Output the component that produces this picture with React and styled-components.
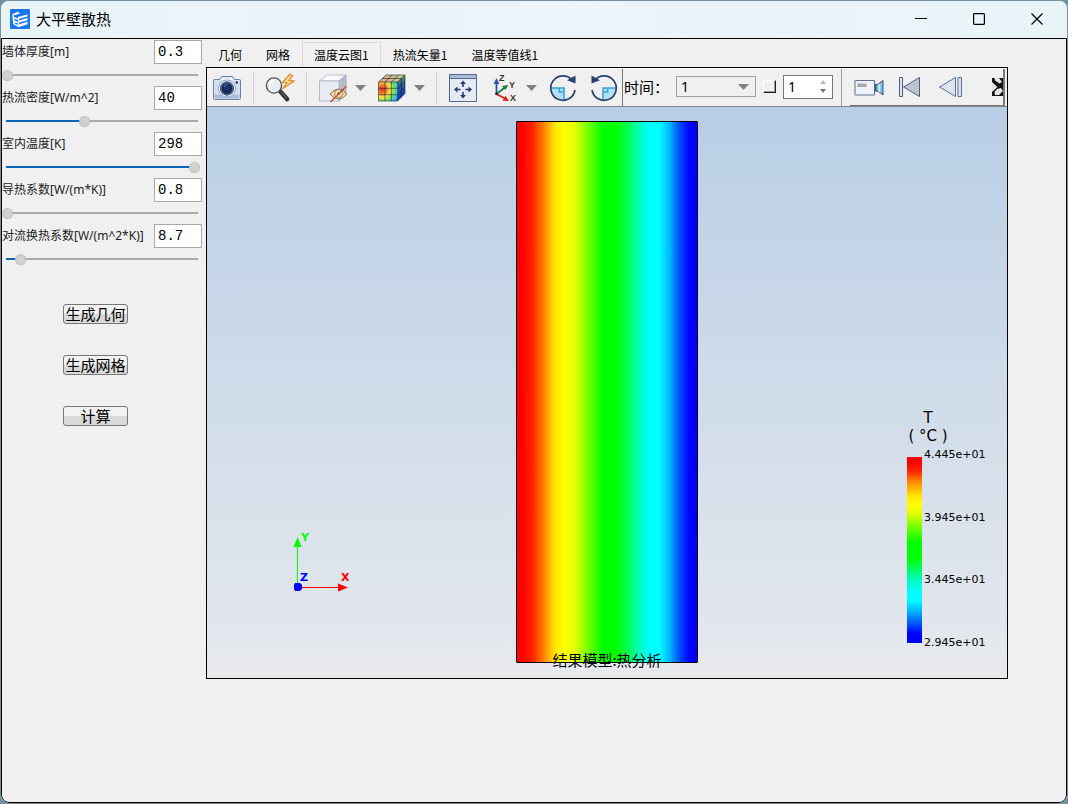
import React from 'react';
import styled, { createGlobalStyle } from 'styled-components';

const uiFont = '"Noto Sans", "Noto Sans CJK SC", sans-serif';
const cjkFont = '"Noto Sans CJK SC", sans-serif';
const sceneFont = '"DejaVu Sans", sans-serif';

const GlobalStyle = createGlobalStyle`
    * {
        box-sizing: border-box;
    }

    body {
        margin: 0;
        background: #6f929f;
        color: #000;
        font-family: ${uiFont};
        font-size: 12px;
    }

    button, input, select {
        margin: 0;
        font-family: inherit;
        color: inherit;
    }
`;

const Window = styled.div`
    display: flex;
    flex-direction: column;
    min-height: 100vh;
    border: 1px solid #7591a0;
    border-radius: 9px;
    background: #f0f0f0;
    overflow: hidden;
`;

const TitleBar = styled.header`
    display: flex;
    align-items: center;
    height: 37px;
    padding: 0 1px 2px 9px;
    background: linear-gradient(90deg, #e9f4f9, #ebf3fb 55%, #e9f4f8);
`;

const Title = styled.h1`
    flex: 1;
    margin: 0 0 0 6px;
    font-family: ${cjkFont};
    font-size: 15px;
    font-weight: 400;
    line-height: 20px;
`;

const WindowButton = styled.button`
    display: flex;
    align-items: center;
    justify-content: center;
    width: 58px;
    height: 35px;
    padding: 0;
    border: 0;
    background: none;
`;

const Content = styled.div`
    display: flex;
    flex: 1;
    border: 1px solid #000;
    border-radius: 0 0 8px 8px;
`;

const Sidebar = styled.aside`
    flex: none;
    width: 204px;
    padding-top: 1px;
`;

const Field = styled.div`
    display: flex;
    flex-wrap: wrap;
    align-items: center;
    justify-content: space-between;
    width: 200px;
`;

const FieldLabel = styled.label`
    font-size: 12px;
    line-height: 24px;
    color: #222;
    white-space: nowrap;
`;

const FieldInput = styled.input`
    width: 48px;
    height: 24px;
    padding: 0 3px;
    border: 1px solid #a9a9a9;
    border-radius: 0;
    background: #fff;
    font-family: "Liberation Mono", monospace;
    font-size: 14px;
    outline: none;
`;

const Slider = styled.input`
    appearance: none;
    width: 198px;
    height: 22px;
    background:
        linear-gradient(#0a66b8, #0a66b8) 4px center / calc((100% - 8px) * var(--fill)) 2px no-repeat,
        linear-gradient(#a9a9a9, #a9a9a9) 4px center / calc(100% - 6px) 2px no-repeat;
    outline: none;

    &::-webkit-slider-thumb {
        appearance: none;
        width: 11px;
        height: 11px;
        border: 1px dotted #aaa;
        border-radius: 50%;
        background: #d0d0d0;
    }
`;

const Actions = styled.div`
    display: flex;
    flex-direction: column;
    align-items: flex-start;
    gap: 31px;
    padding: 34px 0 0 61px;
`;

const ActionButton = styled.button`
    width: 65px;
    height: 20px;
    padding: 0;
    border: 1px solid #777;
    border-radius: 3px;
    background: linear-gradient(#f2f2f2 50%, #d9d9d9 50%);
    font-family: ${cjkFont};
    font-size: 15px;
    line-height: 18px;
    white-space: nowrap;
`;

const Workspace = styled.main`
    display: flex;
    flex: 1;
    flex-direction: column;
    min-width: 0;
    padding: 3px 58px 123px 0;
`;

const TabList = styled.div`
    display: flex;
    height: 25px;
`;

const Tab = styled.button`
    padding: 0 12px;
    border: 0;
    background: none;
    box-shadow: ${(props) => (props.$active ? 'inset 1px 1px #d9d9d9, inset -1px 0 #d9d9d9' : 'none')};
    font-family: ${cjkFont};
    font-size: 12px;
    line-height: 24px;
    white-space: nowrap;
`;

const Viewer = styled.section`
    display: flex;
    flex: 1;
    flex-direction: column;
    border: 1px solid #000;
`;

const Toolbar = styled.div`
    display: flex;
    height: 39px;
    border-top: 1px solid #fff;
    border-bottom: 1px solid #808080;
`;

const ToolGroup = styled.div`
    display: flex;
    align-items: center;
    gap: 11px;
    padding: 0 3px 0 5px;
    border-right: 1px solid #777;
`;

const TimeGroup = styled.div`
    display: flex;
    align-items: center;
    gap: 7px;
    padding: 0 8px 2px 1px;
    border-right: 1px solid #a0a0a0;
`;

const PlaybackGroup = styled.div`
    display: flex;
    flex: 1;
    align-items: center;
    gap: 11px;
    min-width: 0;
    margin: 0 2px 0 8px;
    padding-left: 4px;
    border-right: 2px solid #777;
    border-bottom: 1px solid #777;
    overflow: hidden;
`;

const ToolSplit = styled.div`
    display: flex;
    gap: 6px;
`;

const ToolButton = styled.button`
    display: flex;
    flex: none;
    align-items: center;
    justify-content: center;
    width: ${(props) => (props.$narrow ? 12 : 30)}px;
    height: 30px;
    padding: 0;
    border: 0;
    background: none;
`;

const Separator = styled.div`
    width: 1px;
    height: 32px;
    background: #d0d0d0;
`;

const TimeLabel = styled.label`
    font-family: ${cjkFont};
    font-size: 15px;
    white-space: nowrap;
`;

const SelectBox = styled.div`
    display: flex;
    align-items: center;
    width: 80px;
    height: 21px;
    padding-right: 6px;
    border: 1px solid #a0a0a0;
`;

const Select = styled.select`
    appearance: none;
    flex: 1;
    min-width: 0;
    padding: 0 4px;
    border: 0;
    background: none;
    font-size: 14px;
    line-height: 18px;
    outline: none;
`;

const Check = styled.input`
    appearance: none;
    width: 13px;
    height: 13px;
    border: 1px solid;
    border-color: #fff #222 #222 #fff;
    background: #f0f0f0;
    box-shadow: inset -1px -1px #999;
`;

const SpinBox = styled.div`
    display: flex;
    align-items: center;
    width: 50px;
    height: 24px;
    border: 1px solid #777;
    background: #fff;
`;

const SpinInput = styled.input`
    flex: 1;
    min-width: 0;
    padding: 0 4px;
    border: 0;
    background: none;
    font-size: 14px;
    outline: none;
`;

const SpinArrows = styled.div`
    display: flex;
    flex-direction: column;
    padding-right: 4px;
`;

const SpinButton = styled.button`
    display: flex;
    align-items: center;
    justify-content: center;
    width: 10px;
    height: 9px;
    padding: 0;
    border: 0;
    background: none;
`;

const Viewport = styled.div`
    position: relative;
    display: flex;
    flex: 1;
    justify-content: center;
    padding: 14px 0 15px;
    background: linear-gradient(#b8cee6, #e7e9ed);
`;

const Plate = styled.div`
    width: 182px;
    border: 1px solid #000;
    border-radius: 1px;
    background: linear-gradient(
        90deg,
        #f00 3%, #ff2a00 9%, #ff8400 15%, #ffe600 21%, #ff0 26%, #e4ff00 32%,
        #6cff00 40%, #0f0 48%, #0f0 55%, #00ff48 61%, #00ffc0 68%, #0ff 74%,
        #0ff 79%, #00b4ff 85%, #0050ff 90%, #00f 96%
    );
`;

const Caption = styled.div`
    position: absolute;
    right: 0;
    bottom: 8px;
    left: 0;
    font-family: ${cjkFont};
    font-size: 15px;
    line-height: 20px;
    text-align: center;
`;

const TriadSvg = styled.svg`
    position: absolute;
    bottom: 83px;
    left: 83px;
    font-family: ${sceneFont};
    font-size: 11px;
    font-weight: 700;
`;

const Legend = styled.div`
    position: absolute;
    right: 20px;
    bottom: 28px;
    width: 80px;
    font-family: ${sceneFont};
`;

const LegendTitle = styled.div`
    width: 42px;
    font-size: 15px;
    line-height: 18px;
    text-align: center;
    white-space: nowrap;
`;

const LegendScale = styled.div`
    display: flex;
    gap: 2px;
    padding-top: 3px;
`;

const LegendBar = styled.div`
    width: 15px;
    margin: 9px 0 7px;
    background: linear-gradient(
        #f00 3%, #ff2a00 8%, #ff8400 13%, #ffe600 21%, #ff0 26%, #d8ff00 31%,
        #6cff00 38%, #0f0 46%, #0f0 54%, #00ff48 59%, #00ffc0 66%, #0ff 73%,
        #0ff 77%, #00b4ff 83%, #0050ff 90%, #00f 95%
    );
`;

const LegendTicks = styled.div`
    display: flex;
    flex-direction: column;
    justify-content: space-between;
    height: 202px;
    font-size: 11px;
    line-height: 14px;
`;

const LogoIcon = () => (
    <svg width='20' height='20' viewBox='0 0 20 20' fill='none'>
        <rect width='20' height='20' rx='1' fill='#1677ee' />
        <path d='M2.5 5 8 2.8 10 4.4 4.6 6.3Z' fill='#fff' />
        <path d='m3 5.5 1 9.3 5 2.8M3.6 8.8l5 1.5M3.8 12l5 2' stroke='#fff' strokeWidth='1.6' />
        <path d='m9 7.8 8.5-2.3v2L9 9.8ZM9 11.4l8.5-2.3v2.2L9 13.6ZM9 15.2l8.5-2.5v2.6L9 18Z' fill='#fff' />
        <path d='M8.7 7.5V18' stroke='#fff' />
    </svg>
);

const MinimizeIcon = () => (
    <svg width='12' height='12' viewBox='0 0 12 12' stroke='#000'><path d='M0 5.5h12' /></svg>
);

const MaximizeIcon = () => (
    <svg width='12' height='12' viewBox='0 0 12 12' fill='none' stroke='#000'>
        <rect x='.6' y='.6' width='10.8' height='10.8' rx='1' strokeWidth='1.2' />
    </svg>
);

const CloseIcon = () => (
    <svg width='12' height='12' viewBox='0 0 12 12' stroke='#000'>
        <path d='m.5.5 11 11M11.5.5l-11 11' strokeWidth='1.2' />
    </svg>
);

const CameraIcon = () => (
    <svg width='30' height='30' viewBox='0 0 30 30'>
        <path d='M2.5 6.5h5l2-3h11l2 3h5q1 0 1 1v18q0 1-1 1h-25q-1 0-1-1v-18q0-1 1-1Z' fill='#d3dfef' stroke='#6b82a8' />
        <path d='M10.5 4.7h9l1.5 2.5H9Z' fill='#f6f8fc' />
        <path d='M2.6 21.5h24.8v4H2.6Z' fill='#a9bdd8' />
        <circle cx='15' cy='15.5' r='8.6' fill='#f4f7fb' stroke='#93a5c2' />
        <circle cx='15' cy='15.5' r='6.2' fill='#14264d' stroke='#45618f' strokeWidth='2' />
        <circle cx='15' cy='15.5' r='3' fill='#1d3564' />
        <path d='M12 14q1-2.5 3.5-2.6' stroke='#6d8cbe' fill='none' />
        <circle cx='24.8' cy='9.6' r='1.3' fill='#27406d' />
    </svg>
);

const SearchIcon = () => (
    <svg width='30' height='30' viewBox='0 0 30 30'>
        <path d='M25 1 17.3 9.5l4.6.5-4.4 5.8L29.3 8l-5.5-.8L27.6 3Z' fill='#ffd9a0' stroke='#e08a20' strokeWidth='1.2' />
        <path d='m15 18 7.2 8.2' stroke='#333' strokeWidth='4.4' strokeLinecap='round' />
        <path d='m16 18.5 5.5 6.5' stroke='#777' strokeWidth='1' />
        <circle cx='9' cy='12.5' r='7.6' fill='#e6edf4' stroke='#555' strokeWidth='1.4' />
        <path d='M4.5 12q.5-4 4.5-4.6' stroke='#fff' strokeWidth='2' fill='none' />
    </svg>
);

const HiddenBoxIcon = () => (
    <svg width='30' height='30' viewBox='0 0 30 30' strokeLinejoin='round'>
        <path d='m1.5 8 7.5-6h19l-7 6Z' fill='#f8fafc' stroke='#b9c1cd' />
        <path d='m21 8 7-6v19.5L21 28Z' fill='#b3bdcb' stroke='#a2adbc' />
        <path d='M1.5 8H21v20H1.5Z' fill='#e9ecf2' stroke='#b0b9c8' />
        <path d='M12 21q8.5-10 17 0-8.500 10-17 0Z' fill='#f3dca2' stroke='#8d7340' />
        <circle cx='20.600' cy='20.500' r='4' fill='#ffedb8' stroke='#8b8263' />
        <circle cx='20.600' cy='20.500' r='1.500' fill='#6b6a5c' />
        <path d='M12.500 29 28.500 13' stroke='#cc4a30' strokeWidth='1.400' />
    </svg>
);

const ColorCubeIcon = () => (
    <svg width='30' height='30' viewBox='0 0 30 30' strokeLinejoin='round'>
        <defs>
            <radialGradient id='cubeFront' cx='.2' cy='.38' r='1'>
                <stop offset='0' stopColor='#e82a1d' />
                <stop offset='.22' stopColor='#fb7a2c' />
                <stop offset='.42' stopColor='#ffe344' />
                <stop offset='.62' stopColor='#74dd55' />
                <stop offset='.82' stopColor='#35c4ea' />
                <stop offset='1' stopColor='#1c5fe0' />
            </radialGradient>
            <linearGradient id='cubeSide' x1='0' y1='0' x2='0' y2='1'>
                <stop offset='0' stopColor='#5e9a4c' />
                <stop offset='.45' stopColor='#1f5aa8' />
                <stop offset='1' stopColor='#0a2fc4' />
            </linearGradient>
            <linearGradient id='cubeTop'>
                <stop offset='0' stopColor='#ef9a86' />
                <stop offset='1' stopColor='#b5d99a' />
            </linearGradient>
        </defs>
        <path d='m1.500 9 7.500-7h19l-7 7Z' fill='url(#cubeTop)' />
        <path d='m20.500 9 7.500-7v18.500L20.500 28Z' fill='url(#cubeSide)' />
        <path d='M1.500 9h19v19h-19Z' fill='url(#cubeFront)' />
        <g fill='none' stroke='#15242c' strokeWidth='.8' strokeOpacity='.75'>
            <path d='M1.500 9h19v19h-19ZM1.500 9 9 2h19l-7.500 7M28 2v18.500L20.500 28' />
            <path d='M8 9v19M14.300 9v19M1.500 15.300h19M1.500 21.700h19M8 9l7.300-7M14.300 9l7.300-7M5.200 5.500h19.300M24.300 5.500v19M20.500 15.300l7.500-7M20.500 21.700l7.500-7.200' />
        </g>
    </svg>
);

const FitIcon = () => (
    <svg width='30' height='30' viewBox='0 0 30 30'>
        <path d='M1.5 1.5h27v27h-27Z' fill='#e4ebf5' stroke='#536991' />
        <path d='M2 2h26v3H2Z' fill='#a9bbd6' />
        <path d='M2 5.5h26' stroke='#536991' />
        <path d='M15 10v4M15 19v4M8.5 16.5h4M17.5 16.5h4' stroke='#263b67' strokeWidth='1.6' />
        <path d='m15 7.5 3 3.5h-6Zm0 18 3-3.5h-6Zm-9-9 3.5-3v6Zm18 0-3.500-3v6Z' fill='#263b67' />
    </svg>
);

const AxesIcon = () => (
    <svg width='30' height='30' viewBox='0 0 30 30' fontFamily='Liberation Sans, sans-serif' fontSize='9' fontWeight='700'>
        <path d='M7.5 21V9' stroke='#2f50b0' strokeWidth='1.8' />
        <path d='m7.5 5 2.9 6H4.600Z' fill='#2f50b0' />
        <path d='m7.5 21 8-6.2' stroke='#188034' strokeWidth='1.8' />
        <path d='m19.5 12-3.2 5-3.3-4Z' fill='#188034' />
        <path d='m7.5 21 8 4.3' stroke='#e21c1c' strokeWidth='1.8' />
        <path d='m20 28-6.3-.3 2.8-5Z' fill='#e21c1c' />
        <circle cx='7.5' cy='21' r='1.3' fill='#222' />
        <text x='10' y='7.5' fill='#333'>Z</text>
        <text x='20' y='15' fill='#333'>Y</text>
        <text x='21' y='28' fill='#333'>X</text>
    </svg>
);

const RotateIcon = ({ counter }) => (
    <svg width='30' height='30' viewBox='0 0 30 30' fill='none'>
        {counter ? (
            <>
                <path d='M14 15h12.3q-.4 9.5-12.3 12Z' fill='#aee0f8' />
                <path d='M14 27V15h13' stroke='#36a3d9' strokeWidth='1.6' />
                <path d='M14.7 19h4v-4' stroke='#36a3d9' strokeWidth='1.5' />
                <path d='M5.5 7.5A12.200 12.200 0 1 1 3 17' stroke='#29406f' strokeWidth='1.7' />
                <path d='M2.5 2.5v8l8.500-3.2Z' fill='#29406f' />
            </>
        ) : (
            <>
                <path d='M16 15H3.2q.8 10 12.800 12Z' fill='#aee0f8' />
                <path d='M16 27V15H3' stroke='#36a3d9' strokeWidth='1.6' />
                <path d='M15.3 19h-4v-4' stroke='#36a3d9' strokeWidth='1.5' />
                <path d='M24.5 7.5A12.200 12.200 0 1 0 27 17' stroke='#29406f' strokeWidth='1.7' />
                <path d='M27.500 2.5v8l-8.500-3.2Z' fill='#29406f' />
            </>
        )}
    </svg>
);

const DownArrow = () => (
    <svg width='11' height='6' viewBox='0 0 11 6'><path d='M0 0h11L5.5 6Z' fill='#808080' /></svg>
);

const SpinArrow = ({ up }) => (
    <svg width='6' height='4' viewBox='0 0 6 4'>
        <path d={up ? 'M0 4h6L3 0Z' : 'M0 0h6L3 4Z'} fill={up ? '#bbb' : '#777'} />
    </svg>
);

const VideoIcon = () => (
    <svg width='30' height='30' viewBox='0 0 30 30'>
        <path d='M1 8.5h19.5V23H1Z' fill='#edf1f7' stroke='#5d7092' />
        <path d='M3.500 11.500h9V15h-9Z' fill='#a9a9ad' />
        <path d='M20.500 12h2v7.500h-2Z' fill='#49617f' />
        <path d='m22 12.500 2.500-.5 4.500-3.500V23l-4.500-3.500-2.500-.5Z' fill='#7cc4ea' stroke='#2f4f78' />
        <path d='M25.400 12v8' stroke='#e2f4fc' strokeWidth='1.400' />
    </svg>
);

const FirstFrameIcon = () => (
    <svg width='30' height='30' viewBox='0 0 30 30' stroke='#4a5f87'>
        <path d='M4.5 5.5h3v19h-3Z' fill='#dbe4ef' />
        <path d='m8.5 15 16-9.5v19Z' fill='#bfc4cb' />
    </svg>
);

const StepBackIcon = () => (
    <svg width='30' height='30' viewBox='0 0 30 30' stroke='#5a6e95'>
        <path d='m3.500 15 16-9.500v19Z' fill='#dfe4ea' />
        <path d='M22 5.500h3.500v19H22Z' fill='#dbe4ef' />
    </svg>
);

const MoreIcon = () => (
    <svg width='30' height='30' viewBox='0 0 30 30'>
        <path d='M15 6h14v18H15Z' fill='#111' />
        <path d='M17.500 6h4.500l3 4-2.500 1.500L18 8.500ZM15 10l5.500 5-5.500 5Z' fill='#e4e4e4' />
        <path d='m20 17 4-1 2 3-4 4h-4l-.5-3Z' fill='#e4e4e4' />
    </svg>
);

const Triad = () => (
    <TriadSvg width='64' height='66' viewBox='0 0 64 66'>
        <path d='M7.5 56V14' stroke='#0f0' />
        <path d='m7.5 8 4 10h-8Z' fill='#0f0' />
        <path d='M9 58.5h40' stroke='#f00' />
        <path d='m58 58.5-10-4v8Z' fill='#f00' />
        <path d='M5 54h5l2 2v4l-2 2H5l-1-2v-4Z' fill='#00f' />
        <text x='11' y='12' fill='#0f0'>Y</text>
        <text x='10' y='52' fill='#00f'>Z</text>
        <text x='51' y='52' fill='#f00'>X</text>
    </TriadSvg>
);

const parameters = [
    { id: 'thickness', label: '墙体厚度[m]', value: 0.3, min: 0.3, max: 1 },
    { id: 'flux', label: '热流密度[W/m^2]', value: 40, min: 5, max: 90 },
    { id: 'temperature', label: '室内温度[K]', value: 298, min: 273, max: 298 },
    { id: 'conductivity', label: '导热系数[W/(m*K)]', value: 0.8, min: 0.8, max: 2 },
    { id: 'convection', label: '对流换热系数[W/(m^2*K)]', value: 8.7, min: 8, max: 18 }
];

const tabs = ['几何', '网格', '温度云图1', '热流矢量1', '温度等值线1'];
const ticks = ['4.445e+01', '3.945e+01', '3.445e+01', '2.945e+01'];

class ParameterField extends React.Component {
    constructor(props) {
        super(props);

        this.state = { value: props.parameter.value };
        this.onValueChange = this.onValueChange.bind(this);
    }

    onValueChange(event) {
        this.setState({ value: event.target.value });
    }

    render() {
        const { id, label, min, max } = this.props.parameter;
        const { value } = this.state;
        return (
            <Field>
                <FieldLabel htmlFor={id}>{label}</FieldLabel>
                <FieldInput id={id} value={value} onChange={this.onValueChange} />
                <Slider
                    type='range'
                    aria-label={label}
                    min={min}
                    max={max}
                    step='0.1'
                    value={value}
                    onChange={this.onValueChange}
                    style={{ '--fill': (value - min) / (max - min) }}
                />
            </Field>
        );
    }
}

export default class App extends React.Component {
    constructor(props) {
        super(props);

        this.state = {
            activeTab: '温度云图1',
            step: 1
        };
    }

    setStep(step) {
        this.setState({ step: Math.max(1, Number(step) || 1) });
    }

    renderToolbar() {
        const { step } = this.state;
        return (
            <Toolbar>
                <ToolGroup>
                    <ToolButton aria-label='截图'><CameraIcon /></ToolButton>
                    <Separator />
                    <ToolButton aria-label='查询'><SearchIcon /></ToolButton>
                    <Separator />
                    <ToolSplit>
                        <ToolButton aria-label='隐藏'><HiddenBoxIcon /></ToolButton>
                        <ToolButton $narrow aria-label='隐藏选项'><DownArrow /></ToolButton>
                    </ToolSplit>
                    <ToolSplit>
                        <ToolButton aria-label='云图'><ColorCubeIcon /></ToolButton>
                        <ToolButton $narrow aria-label='云图选项'><DownArrow /></ToolButton>
                    </ToolSplit>
                    <Separator />
                    <ToolButton aria-label='适应窗口'><FitIcon /></ToolButton>
                    <ToolSplit>
                        <ToolButton aria-label='视角'><AxesIcon /></ToolButton>
                        <ToolButton $narrow aria-label='视角选项'><DownArrow /></ToolButton>
                    </ToolSplit>
                    <ToolButton aria-label='顺时针旋转'><RotateIcon /></ToolButton>
                    <ToolButton aria-label='逆时针旋转'><RotateIcon counter /></ToolButton>
                </ToolGroup>
                <TimeGroup>
                    <TimeLabel htmlFor='time'>时间：</TimeLabel>
                    <SelectBox>
                        <Select id='time' defaultValue='1'>
                            <option>1</option>
                        </Select>
                        <DownArrow />
                    </SelectBox>
                    <Check type='checkbox' aria-label='循环' />
                    <SpinBox>
                        <SpinInput aria-label='步数' value={step} onChange={(event) => this.setStep(event.target.value)} />
                        <SpinArrows>
                            <SpinButton aria-label='增加' onClick={() => this.setStep(step + 1)}><SpinArrow up /></SpinButton>
                            <SpinButton aria-label='减少' onClick={() => this.setStep(step - 1)}><SpinArrow /></SpinButton>
                        </SpinArrows>
                    </SpinBox>
                </TimeGroup>
                <PlaybackGroup>
                    <ToolButton aria-label='录制'><VideoIcon /></ToolButton>
                    <ToolButton aria-label='第一帧'><FirstFrameIcon /></ToolButton>
                    <ToolButton aria-label='上一帧'><StepBackIcon /></ToolButton>
                    <ToolButton aria-label='更多'><MoreIcon /></ToolButton>
                </PlaybackGroup>
            </Toolbar>
        );
    }

    render() {
        const { activeTab } = this.state;
        return (
            <>
                <GlobalStyle />
                <Window>
                    <TitleBar>
                        <LogoIcon />
                        <Title>大平壁散热</Title>
                        <WindowButton aria-label='最小化'><MinimizeIcon /></WindowButton>
                        <WindowButton aria-label='最大化'><MaximizeIcon /></WindowButton>
                        <WindowButton aria-label='关闭'><CloseIcon /></WindowButton>
                    </TitleBar>
                    <Content>
                        <Sidebar>
                            {parameters.map((parameter) => (
                                <ParameterField key={parameter.id} parameter={parameter} />
                            ))}
                            <Actions>
                                <ActionButton>生成几何</ActionButton>
                                <ActionButton>生成网格</ActionButton>
                                <ActionButton>计算</ActionButton>
                            </Actions>
                        </Sidebar>
                        <Workspace>
                            <TabList role='tablist'>
                                {tabs.map((tab) => (
                                    <Tab
                                        key={tab}
                                        role='tab'
                                        aria-selected={tab === activeTab}
                                        $active={tab === activeTab}
                                        onClick={() => this.setState({ activeTab: tab })}
                                    >
                                        {tab}
                                    </Tab>
                                ))}
                            </TabList>
                            <Viewer>
                                {this.renderToolbar()}
                                <Viewport>
                                    <Plate />
                                    <Caption>结果模型:热分析</Caption>
                                    <Triad />
                                    <Legend>
                                        <LegendTitle>T</LegendTitle>
                                        <LegendTitle>( °C )</LegendTitle>
                                        <LegendScale>
                                            <LegendBar />
                                            <LegendTicks>
                                                {ticks.map((tick) => <span key={tick}>{tick}</span>)}
                                            </LegendTicks>
                                        </LegendScale>
                                    </Legend>
                                </Viewport>
                            </Viewer>
                        </Workspace>
                    </Content>
                </Window>
            </>
        );
    }
}
